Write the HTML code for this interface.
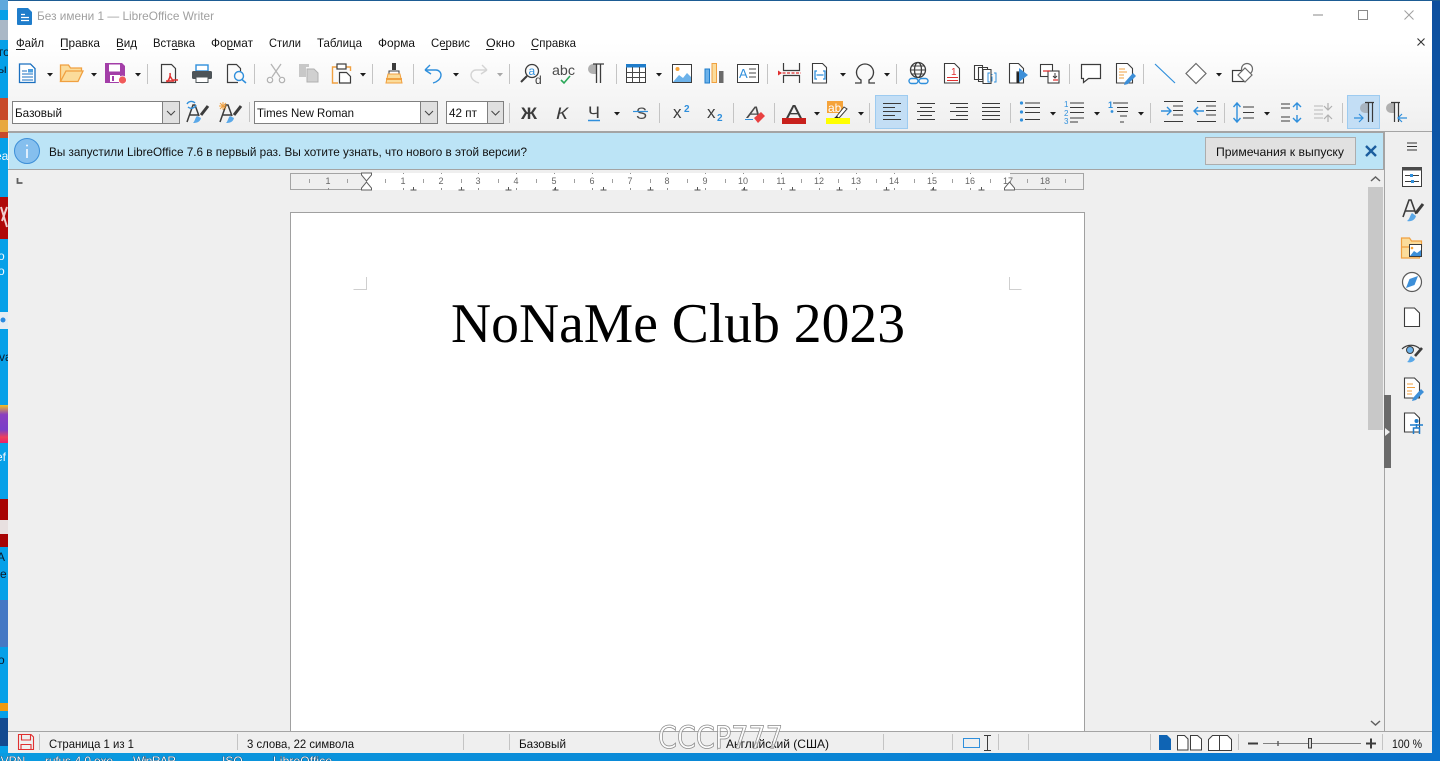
<!DOCTYPE html>
<html lang="ru"><head><meta charset="utf-8"><title>LibreOffice Writer</title>
<style>
html,body{margin:0;padding:0;width:1440px;height:761px;overflow:hidden;background:#0a9be0}
svg{display:block;position:absolute;left:0;top:0}
text{font-family:"Liberation Sans","DejaVu Sans",sans-serif;font-size:12px;fill:#111}
.g{fill:none;stroke:#3c3c3c;stroke-width:1.2}
.b{fill:none;stroke:#2f8fdc;stroke-width:1.4}
.o{fill:none;stroke:#f0a040;stroke-width:1.4}
.l{fill:none;stroke:#3c3c3c;stroke-width:1.3}
.s{stroke:#c4c4c4;stroke-width:1;fill:none}
.lg{fill:none;stroke:#b0b0b0;stroke-width:1.2}
.t{fill:#f4f9ff;stroke:#0b2036;stroke-width:.6;paint-order:stroke}
</style></head><body>
<svg width="1440" height="761" viewBox="0 0 1440 761" xmlns="http://www.w3.org/2000/svg">
<defs>
<linearGradient id="tb" x1="0" y1="0" x2="0" y2="1"><stop offset="0" stop-color="#fff"/><stop offset=".32" stop-color="#fff"/><stop offset="1" stop-color="#efefef"/></linearGradient>
<linearGradient id="rs" x1="0" y1="0" x2="0" y2="1"><stop offset="0" stop-color="#0d4f9e"/><stop offset="1" stop-color="#0a72cc"/></linearGradient>
<linearGradient id="bs" x1="0" y1="0" x2="1" y2="0"><stop offset="0" stop-color="#0a9be0"/><stop offset=".6" stop-color="#0a84d4"/><stop offset="1" stop-color="#0a72cc"/></linearGradient>
<linearGradient id="pu" x1="0" y1="0" x2="0" y2="1"><stop offset="0" stop-color="#f0c020"/><stop offset=".25" stop-color="#8a3fc0"/><stop offset=".65" stop-color="#7a3fc8"/><stop offset=".85" stop-color="#f0405a"/><stop offset="1" stop-color="#e8206a"/></linearGradient>
</defs>

<!-- desktop -->
<rect width="8" height="761" fill="#06a0e8"/>
<rect x="1432" width="8" height="761" fill="url(#rs)"/>
<rect y="753" width="1440" height="8" fill="url(#bs)"/>
<rect width="1440" height="1" fill="#1d5c94"/>
<rect x="0" y="0" width="8" height="10" fill="#5fa8dc"/>
<rect x="0" y="20" width="8" height="20" fill="#aab8c6"/>
<rect x="0" y="98" width="8" height="40" fill="#c84a2a"/>
<rect x="0" y="120" width="8" height="12" fill="#e8a840"/>
<rect x="0" y="197" width="8" height="42" fill="#b00808"/>
<path d="M1 207l6 20M7 207l-5 14" stroke="#f0d0d0" stroke-width="2"/>
<rect x="0" y="312" width="8" height="17" fill="#e6ecf2"/>
<circle cx="3" cy="320" r="2.5" fill="#2b8ae0"/>
<rect x="0" y="405" width="8" height="38" fill="url(#pu)"/>
<rect x="0" y="499" width="8" height="48" fill="#a80404"/>
<rect x="0" y="520" width="8" height="14" fill="#e8e0e0"/>
<rect x="0" y="600" width="8" height="47" fill="#4678c4"/>
<rect x="0" y="703" width="8" height="8" fill="#f09a10"/>
<rect x="0" y="718" width="8" height="28" fill="#144a90"/>
<g style="font-size:12px">
<text x="-1" y="56" style="fill:#0d1a2a">го</text><text x="-2" y="73" style="fill:#0d1a2a">ы</text>
<text x="-5" y="160" style="fill:#f2f8ff">ea</text><text x="-2" y="260" style="fill:#f2f8ff">о</text><text x="-2" y="275" style="fill:#f2f8ff">о</text>
<text x="-1" y="361" style="fill:#0d1a2a">va</text><text x="-4" y="461" style="fill:#f2f8ff">ef</text>
<text x="-3" y="561" style="fill:#0d1a2a">A</text><text x="-4" y="578" style="fill:#0d1a2a">re</text><text x="-2" y="664" style="fill:#0d1a2a">о</text>
<text x="-6" y="765" class="t">nVPN</text><text x="45" y="765" textLength="68" class="t">rufus-4.0.exe</text><text x="133" y="765" textLength="43" class="t">WinRAR</text><text x="222" y="765" class="t">ISO</text><text x="273" y="765" textLength="59" class="t">LibreOffice</text>
</g>

<!-- window base -->
<rect x="8" y="1" width="1424" height="752" fill="#efefef"/>
<rect x="8" y="1" width="1424" height="131" fill="url(#tb)"/>
<rect x="8" y="131" width="1424" height="1.5" fill="#a4a4a4"/>

<!-- title -->
<path d="M18 8h10l4 4v12a1 1 0 0 1-1 1H18a1 1 0 0 1-1-1V9a1 1 0 0 1 1-1z" fill="#1f7dcb"/>
<path d="M21 14.500h4M21 17.500h8M21 20.500h8" stroke="#fff" stroke-width="1.2"/>
<text x="37" y="20" textLength="177" lengthAdjust="spacingAndGlyphs" style="fill:#a0a0a0">Без имени 1 — LibreOffice Writer</text>
<path d="M1313 15h10" stroke="#8a8a8a" stroke-width="1"/>
<rect x="1358.500" y="10.500" width="9" height="9" fill="none" stroke="#8a8a8a"/>
<path d="M1404.500 10.500l9 9M1413.500 10.500l-9 9" stroke="#a0a0a0" stroke-width="1"/>
<path d="M1417.500 38.500l7 7M1424.500 38.500l-7 7" stroke="#333" stroke-width="1.1"/>

<!-- menu -->
<g>
<text x="16" y="47" textLength="28" lengthAdjust="spacingAndGlyphs">Файл</text><text x="60" y="47" textLength="40" lengthAdjust="spacingAndGlyphs">Правка</text><text x="116" y="47" textLength="21" lengthAdjust="spacingAndGlyphs">Вид</text><text x="153" y="47" textLength="42" lengthAdjust="spacingAndGlyphs">Вставка</text><text x="211" y="47" textLength="42" lengthAdjust="spacingAndGlyphs">Формат</text><text x="269" y="47" textLength="32" lengthAdjust="spacingAndGlyphs">Стили</text><text x="317" y="47" textLength="45" lengthAdjust="spacingAndGlyphs">Таблица</text><text x="378" y="47" textLength="37" lengthAdjust="spacingAndGlyphs">Форма</text><text x="431" y="47" textLength="39" lengthAdjust="spacingAndGlyphs">Сервис</text><text x="486" y="47" textLength="29" lengthAdjust="spacingAndGlyphs">Окно</text><text x="531" y="47" textLength="45" lengthAdjust="spacingAndGlyphs">Справка</text>
</g>
<path d="M16 49.500h9M61 49.500h7M117 49.500h7M172 49.500h6M228 49.500h6M441 49.500h7M486 49.500h8M531 49.500h7" stroke="#222" stroke-width="1"/>

<!-- separators -->
<path class="s" d="M147.500 64v20M254.500 64v20M372.500 64v20M413.500 64v20M509.500 64v20M616.500 64v20M767.500 64v20M896.500 64v20M1069.500 64v20M1143.500 64v20M249.500 102v20M509.500 103v20M659.500 103v20M733.500 103v20M774.500 103v20M869.500 103v20M1010.500 103v20M1150.500 103v20M1224.500 103v20M1342.500 103v20"/>

<!-- dropdown arrows -->
<path fill="#1c1c1c" d="M47 73h6l-3 3.500zM91 73h6l-3 3.500zM135 73h6l-3 3.500zM360 73h6l-3 3.500zM453 73h6l-3 3.500zM656 73h6l-3 3.500zM840 73h6l-3 3.500zM884 73h6l-3 3.500zM1216 73h6l-3 3.500zM614 112h6l-3 3.500zM814 112h6l-3 3.500zM858 112h6l-3 3.500zM1050 112h6l-3 3.500zM1094 112h6l-3 3.500zM1138 112h6l-3 3.500zM1264 112h6l-3 3.500z"/>
<path fill="#a8a8a8" d="M497 73h6l-3 3.500z"/>

<!-- row 1 icons -->
<path fill="#fff" stroke="#1a6fbf" stroke-width="1.3" d="M19.500 64h11l4.500 4.500V82.500H19.500z"/><path stroke="#1a6fbf" stroke-width="1.1" d="M22 71h5M22 74h11M22 77h11M22 80h11"/><rect x="28" y="69" width="5" height="3.500" fill="#4ea0e0"/>
<path fill="#fbdc9b" stroke="#f0a040" stroke-width="1.3" d="M60.500 81.500V65h8l2 3h11v3H66l-5.500 10.500zM60.500 81.500L66 71h17l-5 10.500z"/>
<path fill="#a33ea8" d="M105 63h17l3 3v14h-20z"/><path fill="#a33ea8" d="M105 80h15v3h-15z"/><rect x="109" y="64.500" width="11" height="7" fill="#fff"/><rect x="110" y="75" width="10" height="7" fill="#fff"/><rect x="112" y="76" width="2" height="5" fill="#a33ea8"/><circle cx="122.500" cy="80" r="4" fill="#f05a5a" stroke="#fff" stroke-width=".8"/>
<path class="g" fill="#fff" d="M161.500 64.500h10l4 4V82.500h-14z"/><path stroke="#e03030" stroke-width="1.500" fill="none" d="M170 73c1 5-3 9-3 9M170 76l3 5-7 0M173 80h5"/>
<rect x="196" y="65" width="12" height="6" fill="#fff" stroke="#2f8fdc" stroke-width="1.4"/><rect x="192" y="71" width="20" height="8" rx="1.500" fill="#4d5458"/><rect x="196" y="77" width="12" height="5.500" fill="#fff" stroke="#4d5458"/>
<path class="g" d="M227.500 64.500h9l4 4V72M238 82.500H227.500V64.500"/><circle cx="239" cy="76" r="4.500" class="b"/><path d="M242 79.500l4 3.500" stroke="#2f8fdc" stroke-width="1.500"/>
<path d="M271 64l9 13M281 64l-9 13" stroke="#b4b4b4" stroke-width="1.300"/><circle cx="270" cy="80" r="2.700" class="lg"/><circle cx="282" cy="80" r="2.700" class="lg"/>
<path d="M299 64h10v3h-3v10h-7z" fill="#c8c8c8"/><path d="M307 69h7l4 4v9h-11z" fill="#d0d0d0" stroke="#b0b0b0"/>
<path class="o" d="M337 67h-4.500v16H338"/><path class="o" d="M346 67h4.500v4"/><rect x="337" y="64" width="9" height="5" fill="#fff" stroke="#3c3c3c" stroke-width="1.200"/><path d="M339.500 72.500h7l4 4v6.500h-11z" fill="#fff" stroke="#3c3c3c" stroke-width="1.200"/>
<path d="M392 63h4v7h-4z" fill="#3c3c3c"/><path d="M389 71h10v3h-10z" fill="#fff" stroke="#3c3c3c"/><path d="M388 74h12l2 9h-16z" fill="#fbdc9b" stroke="#f0a040"/><rect x="386" y="78" width="16" height="2" fill="#f0a040"/>
<path d="M425 70l5-5M425 70l6 4M425 70h11a5 5 0 0 1 5 5c0 4-4 7-8 8" fill="none" stroke="#2f8fdc" stroke-width="1.400"/>
<path d="M487 70l-5-5M487 70l-6 4M487 70h-11a5 5 0 0 0-5 5c0 4 4 7 8 8" fill="none" stroke="#d4d4d4" stroke-width="1.400"/>
<circle cx="532" cy="71" r="6.500" fill="none" stroke="#3c3c3c" stroke-width="1.300"/><path d="M527 76l-6 6" stroke="#3c3c3c" stroke-width="2"/>
<text x="528.500" y="75" style="font-size:12px;fill:#2f8fdc">a</text><text x="535" y="84" style="font-size:12px;fill:#3c3c3c">d</text>
<text x="552" y="75" textLength="23" lengthAdjust="spacingAndGlyphs" style="font-size:14px;fill:#4a4a4a">abc</text><path d="M561 80l3 3 6-7" fill="none" stroke="#2aa858" stroke-width="1.600"/>
<path d="M596 64h-3a5 5 0 0 0 0 10h3z" fill="#b0b0b0"/><path d="M596.500 64V83M600.500 64V83M593 64h11" stroke="#3c3c3c" stroke-width="1.300" fill="none"/>
<rect x="626.500" y="64.500" width="19" height="18" fill="#fff" stroke="#3c3c3c"/><rect x="626" y="64" width="20" height="3.500" fill="#1f7dcb"/><path d="M632.500 67v15M639.500 67v15M627 72.500h18M627 77.500h18" stroke="#4a4a4a"/>
<rect x="672.500" y="64.500" width="19" height="18" fill="#fff" stroke="#3c3c3c"/><circle cx="677.500" cy="69" r="2" fill="#f5a33a"/><path d="M673 82l6-7 4 3 4-5 4 4v5z" fill="#6cb2ea"/>
<rect x="705" y="69" width="4.500" height="14" fill="#6cb2ea" stroke="#1f7dcb"/><rect x="712" y="63.500" width="4.500" height="19" fill="#fbdc9b" stroke="#f0a040"/><rect x="719" y="71" width="4.500" height="12" fill="#6a6a6a"/>
<rect x="737.500" y="64.500" width="21" height="18" fill="#fff" stroke="#3c3c3c"/><text x="739" y="78" style="font-size:13px;fill:#2f8fdc">A</text><path d="M749 69h7M749 73h7M749 77h7" stroke="#4a4a4a"/>
<path d="M783.500 63v7.500h16V63M783.500 83v-7.500h16V83" fill="none" stroke="#3c3c3c" stroke-width="1.200"/><path d="M778 73h23" stroke="#e03030" stroke-dasharray="3 1.500" stroke-width="1.200"/><path d="M778 70.500l4 2.500-4 2.500z" fill="#e03030"/>
<path d="M812.500 63.500h10l4 4v15.500h-14z" fill="#fff" stroke="#3c3c3c" stroke-width="1.100"/><path d="M817 71h-2v8h2M823 71h2v8h-2M816.500 75h7" stroke="#2f8fdc" stroke-width="1.300" fill="none"/>
<path d="M855 83h6v-3a8.500 8.500 0 1 1 8 0v3h6" fill="none" stroke="#3c3c3c" stroke-width="1.300"/>
<circle cx="918" cy="70" r="7.500" class="l"/><ellipse cx="918" cy="70" rx="3.500" ry="7.500" class="l"/><path d="M910.500 70h15M912 66h12M912 74h12" stroke="#3c3c3c"/><rect x="909" y="78.500" width="9" height="5" rx="2.500" class="b"/><rect x="919" y="78.500" width="9" height="5" rx="2.500" class="b"/>
<path d="M944.500 63.500h10l5 5v14.500h-15z" fill="#fff" stroke="#3c3c3c" stroke-width="1.100"/><text x="951" y="75" style="font-size:10px;fill:#e03030">1</text><path d="M947 77.500h11M947 80.500h11" stroke="#e03030"/>
<path d="M974.500 65.500h8v14h-8zM978.500 67.500h9v14h-9z" fill="#fff" stroke="#3c3c3c" stroke-width="1.100"/><path d="M983 69.500h8v14h-8z" fill="#fff" stroke="#3c3c3c" stroke-width="1.100"/><path d="M990 73h-2v9h2M994 73h2v9h-2M992 74v1M992 76.500v5" stroke="#2f8fdc" fill="none"/>
<path d="M1009.500 63.500h9l5 5V83h-14z" fill="#fff" stroke="#3c3c3c" stroke-width="1.100"/><path d="M1017 83V72h2v11" stroke="#3c3c3c" stroke-width="1.200"/><path d="M1019 68v14l9-7z" fill="#3d8fd8"/>
<rect x="1040.500" y="64.500" width="12" height="12" fill="#fff" stroke="#3c3c3c" stroke-width="1.100"/><rect x="1048" y="71" width="11" height="12" fill="#fff" stroke="#3c3c3c" stroke-width="1.100"/><path d="M1043 71h7M1053 80h5" stroke="#e03030" stroke-width="1.200"/><path d="M1055 73v5M1053 76l2 2 2-2" fill="none" stroke="#3c3c3c"/>
<path d="M1081.500 64.500h19v14h-12l-5 4v-4h-2z" fill="#fff" stroke="#3c3c3c" stroke-width="1.200"/>
<path d="M1116.500 63.500h11l5 5v14.500h-16z" fill="#fff" stroke="#3c3c3c" stroke-width="1.100"/><path d="M1119 69h6M1119 72h8M1119 75h5M1119 78h5" stroke="#f0a040"/><path d="M1125 82l8-9 3 3-8 8-4 1z" fill="#3d8fd8"/>
<path d="M1155 64l20 19" stroke="#2f8fdc" stroke-width="1.200"/>
<path d="M1196 63.500l10 10-10 10-10-10z" fill="#fff" stroke="#6a6a6a" stroke-width="1.200"/>
<rect x="1232.500" y="70.500" width="11" height="11" fill="#fff" stroke="#3c3c3c" stroke-width="1.200"/><circle cx="1247" cy="69" r="5.500" fill="#fff" stroke="#6a6a6a" stroke-width="1.200"/><path d="M1245 68l7 7-7 7-7-7z" fill="#fff" stroke="#6a6a6a" stroke-width="1.200"/>

<!-- row 2 combos -->
<rect x="12.500" y="101.500" width="167" height="22" fill="#fff" stroke="#808080"/>
<rect x="162.500" y="101.500" width="17" height="22" fill="#e0e0e0" stroke="#808080"/>
<path d="M167 111l4 4 4-4" fill="none" stroke="#444"/>
<text x="15" y="117" textLength="47" lengthAdjust="spacingAndGlyphs">Базовый</text>
<rect x="254.500" y="101.500" width="183" height="22" fill="#fff" stroke="#808080"/>
<rect x="420.500" y="101.500" width="17" height="22" fill="#e0e0e0" stroke="#808080"/>
<path d="M425 111l4 4 4-4" fill="none" stroke="#444"/>
<text x="257" y="117" textLength="97" lengthAdjust="spacingAndGlyphs">Times New Roman</text>
<rect x="446.500" y="101.500" width="57" height="22" fill="#fff" stroke="#808080"/>
<rect x="487.500" y="101.500" width="16" height="22" fill="#e0e0e0" stroke="#808080"/>
<path d="M491.500 111l4 4 4-4" fill="none" stroke="#444"/>
<text x="449" y="117" textLength="28" lengthAdjust="spacingAndGlyphs">42 пт</text>

<!-- style icons -->
<path d="M187 122l6-17h2l4 11M190 115h8" fill="none" stroke="#3c3c3c" stroke-width="1.500"/><path d="M208 106l-7 9" stroke="#3c3c3c" stroke-width="3"/><path d="M197 116l4 2c-1 4-4 5-8 5 2-2 2-5 4-7z" fill="#5aa8e8"/><path d="M187 104a5 5 0 0 1 8-1M196 105a5 5 0 0 1-8 2" class="b"/>
<path d="M220 122l6-17h2l4 11M223 115h8" fill="none" stroke="#3c3c3c" stroke-width="1.500"/><path d="M241 106l-7 9" stroke="#3c3c3c" stroke-width="3"/><path d="M230 116l4 2c-1 4-4 5-8 5 2-2 2-5 4-7z" fill="#5aa8e8"/><path d="M223 102v8M219 106h8M220 103l6 6M226 103l-6 6" stroke="#f0a040"/>

<!-- char formats -->
<text x="521" y="119" textLength="16" lengthAdjust="spacingAndGlyphs" style="font-size:17px;font-weight:bold;fill:#3c3c3c">Ж</text>
<text x="556" y="119" textLength="12" lengthAdjust="spacingAndGlyphs" style="font-size:17px;font-style:italic;fill:#3c3c3c">К</text>
<text x="588" y="118" textLength="12" lengthAdjust="spacingAndGlyphs" style="font-size:17px;fill:#3c3c3c">Ч</text><path d="M588 120.500h12" stroke="#2f8fdc" stroke-width="1.500"/>
<text x="636" y="119" textLength="11" lengthAdjust="spacingAndGlyphs" style="font-size:17px;fill:#4a4a4a">S</text><path d="M633 111.500h15" stroke="#2f8fdc" stroke-width="1.200"/>
<text x="673" y="118" style="font-size:17px;fill:#3c3c3c">x</text><text x="684" y="112" style="font-size:10px;font-weight:bold;fill:#2f8fdc">2</text>
<text x="707" y="118" style="font-size:17px;fill:#3c3c3c">x</text><text x="717" y="121" style="font-size:10px;font-weight:bold;fill:#2f8fdc">2</text>
<text x="747" y="118" textLength="14" lengthAdjust="spacingAndGlyphs" style="font-size:17px;font-style:italic;fill:#4a4a4a">A</text><path d="M745 119.500h8" stroke="#2f8fdc"/><path d="M754 118l7-6 4 4-7 7z" fill="#e84040"/>
<text x="786" y="118" textLength="16" lengthAdjust="spacingAndGlyphs" style="font-size:18px;fill:#3c3c3c">A</text><rect x="782" y="118" width="24" height="6" fill="#c8201c"/>
<rect x="827" y="101" width="16" height="12" fill="#f5a33a"/><text x="828" y="112" style="font-size:12px;fill:#fff">ab</text><path d="M836 117l8-10 3 2-8 9z" fill="#fff" stroke="#3c3c3c"/><path d="M834 118l3-2 2 2z" fill="#222"/><rect x="826" y="118" width="24" height="6" fill="#ffff00"/>

<!-- align -->
<rect x="875.500" y="95.500" width="32" height="33" fill="#c3def5" stroke="#9dcbf0"/>
<path d="M883 103.500h18M883 107.500h12M883 111.500h18M883 115.500h12M883 119.500h18" stroke="#3a3a3a" fill="none"/>
<path d="M917 103.500h18M920 107.500h12M917 111.500h18M920 115.500h12M917 119.500h18" stroke="#3a3a3a"/>
<path d="M950 103.500h18M956 107.500h12M950 111.500h18M956 115.500h12M950 119.500h18" stroke="#3a3a3a"/>
<path d="M982 103.500h18M982 107.500h18M982 111.500h18M982 115.500h18M982 119.500h18" stroke="#3a3a3a"/>
<path d="M1025 103h15M1025 107.500h15M1025 119.500h15M1025 112.500h15" stroke="#3a3a3a"/><circle cx="1021.500" cy="103" r="1.600" fill="#2f8fdc"/><circle cx="1021.500" cy="112" r="1.600" fill="#2f8fdc"/><circle cx="1021.500" cy="120" r="1.600" fill="#2f8fdc"/>
<text x="1064" y="107" style="font-size:8px;fill:#2f8fdc">1</text><text x="1064" y="116" style="font-size:8px;fill:#2f8fdc">2</text><text x="1064" y="124" style="font-size:8px;fill:#2f8fdc">3</text><path d="M1070 103h14M1070 107.500h14M1070 112.500h14M1070 118h14M1070 122h8" stroke="#3a3a3a"/>
<text x="1108" y="108" style="font-size:9px;font-weight:bold;fill:#2f8fdc">1</text><circle cx="1112" cy="111.500" r="1.400" fill="#2f8fdc"/><path d="M1113 103h15M1117 107.500h11M1117 111.500h11M1120 116h7M1120 122h4" stroke="#3a3a3a"/>
<path d="M1164 101.500h19M1173 106h10M1173 110.500h10M1173 115h10M1164 121.500h19" stroke="#3a3a3a"/><path d="M1161 111h10M1167 107l4 4-4 4" class="b"/>
<path d="M1197 101.500h19M1206 106h10M1206 110.500h10M1206 115h10M1197 121.500h19" stroke="#3a3a3a"/><path d="M1204 111h-10M1198 107l-4 4 4 4" class="b"/>
<path d="M1237 104v17M1233.500 107l3.500-4 3.500 4M1233.500 118l3.500 4 3.500-4" class="b"/><path d="M1243 107h11M1243 112.500h11M1243 118h11" stroke="#3a3a3a"/>
<path d="M1281 104h9M1281 108h9M1281 117h9M1281 121h9" stroke="#3a3a3a"/><path d="M1297 103v7M1293 107l4-4 4 4M1297 122v-7M1293 118l4 4 4-4" class="b"/>
<path d="M1314 106h9M1314 110h9M1314 114h9M1314 118h9" stroke="#b8b8b8"/><path d="M1328 103v7M1324 106l4 4 4-4M1328 122v-7M1324 119l4-4 4 4" class="lg"/>
<rect x="1347.500" y="95.500" width="32" height="33" fill="#c3def5" stroke="#9dcbf0"/>
<path d="M1368 103h-3a5 5 0 0 0 0 10h3z" fill="#a8b4c0"/><path d="M1368.500 103V122M1372.500 103V122M1365 102.500h9" stroke="#3a3a3a" stroke-width="1.200" fill="none"/><path d="M1354 118h9M1359 114l4 4-4 4" fill="none" stroke="#2f8fdc" stroke-width="1.200"/>
<path d="M1394 103h-3a5 5 0 0 0 0 10h3z" fill="#b0b0b0"/><path d="M1394.500 103V122M1398.500 103V122M1391 102.500h9" stroke="#3a3a3a" stroke-width="1.200" fill="none"/><path d="M1407 118h-9M1402 114l-4 4 4 4" fill="none" stroke="#2f8fdc" stroke-width="1.200"/>

<!-- infobar -->
<rect x="9" y="133" width="1374" height="36" fill="#bce4f6"/>
<path d="M8 132.500h1376M8 169.500h1376M1383.500 132v38" stroke="#a4a4a4" fill="none"/>
<circle cx="27" cy="151" r="12.500" fill="#85bfee" stroke="#3d8fd8" stroke-width="1"/>
<path d="M27 149v9" stroke="#f4faff" stroke-width="1.600"/><circle cx="27" cy="145.500" r="1" fill="#f4faff"/>
<text x="49" y="156" textLength="478" lengthAdjust="spacingAndGlyphs">Вы запустили LibreOffice 7.6 в первый раз. Вы хотите узнать, что нового в этой версии?</text>
<rect x="1205.500" y="137.500" width="150" height="27" fill="#e1e1e1" stroke="#adadad"/>
<text x="1216" y="156" textLength="128" lengthAdjust="spacingAndGlyphs">Примечания к выпуску</text>
<path d="M1366 146l10 10M1376 146l-10 10" stroke="#1b5e9e" stroke-width="2.400"/>

<!-- ruler -->
<path d="M17.500 178v5h5" fill="none" stroke="#606060" stroke-width="1.800"/>
<rect x="290.500" y="173.500" width="793" height="16" fill="#efefef" stroke="#a4a4a4"/>
<rect x="366" y="173" width="644" height="17" fill="#fff"/>
<path d="M309.500 179v4M347.500 179v4M385.500 179v4M423.500 179v4M461.500 179v4M498.500 179v4M536.500 179v4M574.500 179v4M612.500 179v4M650.500 179v4M687.500 179v4M725.500 179v4M763.500 179v4M801.500 179v4M838.500 179v4M876.500 179v4M914.500 179v4M952.500 179v4M990.500 179v4M1027.500 179v4M1065.500 179v4" stroke="#a0a0a0"/>
<path d="M328.500 188v2M403.500 173v1M403.500 188v2M441.500 173v1M441.500 188v2M478.500 173v1M478.500 188v2M516.500 173v1M516.500 188v2M554.500 173v1M554.500 188v2M592.500 173v1M592.500 188v2M630.500 173v1M630.500 188v2M667.500 173v1M667.500 188v2M705.500 173v1M705.500 188v2M743.500 173v1M743.500 188v2M781.500 173v1M781.500 188v2M819.500 173v1M819.500 188v2M856.500 173v1M856.500 188v2M894.500 173v1M894.500 188v2M932.500 173v1M932.500 188v2M970.500 173v1M970.500 188v2M1045.500 188v2" stroke="#909090"/>
<g text-anchor="middle">
<text x="328" y="184" style="font-size:9px;fill:#666">1</text><text x="403" y="184" style="font-size:9px;fill:#666">1</text><text x="441" y="184" style="font-size:9px;fill:#666">2</text><text x="478" y="184" style="font-size:9px;fill:#666">3</text><text x="516" y="184" style="font-size:9px;fill:#666">4</text><text x="554" y="184" style="font-size:9px;fill:#666">5</text><text x="592" y="184" style="font-size:9px;fill:#666">6</text><text x="630" y="184" style="font-size:9px;fill:#666">7</text><text x="667" y="184" style="font-size:9px;fill:#666">8</text><text x="705" y="184" style="font-size:9px;fill:#666">9</text><text x="743" y="184" style="font-size:9px;fill:#666">10</text><text x="781" y="184" style="font-size:9px;fill:#666">11</text><text x="819" y="184" style="font-size:9px;fill:#666">12</text><text x="856" y="184" style="font-size:9px;fill:#666">13</text><text x="894" y="184" style="font-size:9px;fill:#666">14</text><text x="932" y="184" style="font-size:9px;fill:#666">15</text><text x="970" y="184" style="font-size:9px;fill:#666">16</text><text x="1008" y="184" style="font-size:9px;fill:#666">17</text><text x="1045" y="184" style="font-size:9px;fill:#666">18</text>
</g>
<path d="M410.500 190h6M413.500 187v3M458.500 190h6M461.500 187v3M505.500 190h6M508.500 187v3M552.500 190h6M555.500 187v3M600.500 190h6M603.500 187v3M647.500 190h6M650.500 187v3M694.500 190h6M697.500 187v3M741.500 190h6M744.500 187v3M789.500 190h6M792.500 187v3M836.500 190h6M839.500 187v3M883.500 190h6M886.500 187v3M930.500 190h6M933.500 187v3M978.500 190h6M981.500 187v3" stroke="#555" stroke-width="1" fill="none"/>
<path d="M361.500 173h10v2l-5 6-5-6zM361.500 190h10v-2l-5-6-5 6z" fill="#fff" stroke="#606060" stroke-width="1"/>
<path d="M1004.500 190h10v-2l-5-6-5 6z" fill="#fff" stroke="#606060"/>

<!-- page -->
<rect x="290.500" y="212.500" width="794" height="540" fill="#fff" stroke="#a0a0a0"/>
<path d="M366.500 277v12.500h-13M1009.500 277v12.500h12" fill="none" stroke="#cfcfcf"/>
<text x="451" y="342" textLength="454" lengthAdjust="spacingAndGlyphs" style="font-family:'Liberation Serif','Times New Roman',serif;font-size:56px;fill:#000">NoNaMe Club 2023</text>

<!-- scrollbar -->
<rect x="1368" y="170" width="16" height="562" fill="#efefef"/>
<rect x="1368" y="187" width="15" height="243" fill="#c8c8c8"/>
<path d="M1371 181l4.500-4 4.500 4M1371 721l4.500 4 4.500-4" fill="none" stroke="#606060" stroke-width="1.500"/>

<!-- sidebar -->
<rect x="1385" y="132" width="47" height="600" fill="#efefef"/>
<path d="M1384.500 132v600" stroke="#a4a4a4"/>
<rect x="1384" y="395" width="7" height="73" fill="#6a6a6a"/>
<path d="M1385 428l5 4-5 4z" fill="#eee"/>
<path d="M1407 143h10M1407 146.500h10M1407 150h10" stroke="#333" stroke-width="1"/>
<rect x="1402.500" y="167.500" width="19" height="19" fill="#fff" stroke="#3c3c3c"/><rect x="1402" y="167" width="20" height="3.500" fill="#4a4a4a"/><path d="M1405 175.500h14M1405 181.500h14" stroke="#3c3c3c"/><rect x="1410" y="174" width="3" height="3" fill="#2f8fdc"/><rect x="1411" y="180" width="3" height="3" fill="#2f8fdc"/>
<path d="M1403 217l6-17h2l5 14M1405.500 211h9" fill="none" stroke="#3c3c3c" stroke-width="1.600"/><path d="M1423 204l-7 9" stroke="#3c3c3c" stroke-width="3"/><path d="M1412 213l4 3c-1 4-5 6-9 5 3-2 3-6 5-8z" fill="#5aa8e8"/>
<path d="M1401.500 238h8l2 3h10v6h-20zM1401.500 258v-11h20l-2 11z" fill="#fbdc9b" stroke="#f0a040" stroke-width="1.200"/><rect x="1409.500" y="244.500" width="12" height="12" fill="#fff" stroke="#3c3c3c"/><path d="M1410 256l4-5 3 2 4-3v6z" fill="#3d8fd8"/><circle cx="1412" cy="248" r="1.300" fill="#f5a33a"/>
<circle cx="1412" cy="282" r="9.500" fill="#fff" stroke="#5a5a5a" stroke-width="1.200"/><path d="M1418 276l-3.500 9-8.500 3 3.500-9z" fill="#3d8fd8"/>
<path d="M1404.500 308h10l5 5v13.500h-15z" fill="#fff" stroke="#3c3c3c" stroke-width="1.100"/>
<path d="M1402 349c5-5 13-5 18 0" fill="none" stroke="#3c3c3c" stroke-width="1.200"/><circle cx="1410" cy="350" r="3.500" fill="#6cb2ea" stroke="#3c3c3c"/><path d="M1422 348l-7 8" stroke="#3c3c3c" stroke-width="2.600"/><path d="M1411 356l4 3c-1 3-5 4-8 3 2-1 2-4 4-6z" fill="#5aa8e8"/>
<path d="M1404.500 378h10l5 5v15h-15z" fill="#fff" stroke="#3c3c3c" stroke-width="1.100"/><path d="M1407 384h6M1407 387.500h8M1407 391h5M1407 394h5" stroke="#f0a040"/><path d="M1413 398l8-9 3 3-8 8-4 1z" fill="#3d8fd8"/>
<path d="M1404.500 413h10l5 5v14h-15z" fill="#fff" stroke="#3c3c3c" stroke-width="1.100"/><circle cx="1416.500" cy="421" r="2" fill="#1f7dcb"/><path d="M1410 425h13M1416.500 424v4M1413.500 434v-6h6v6" fill="none" stroke="#1f7dcb" stroke-width="1.500"/>

<!-- status bar -->
<rect x="8" y="732" width="1424" height="21" fill="#efefef"/>
<path d="M8 731.500h1424" stroke="#a4a4a4"/>
<path d="M39.500 734v16M237.500 734v16M463.500 734v16M509.500 734v16M717.500 734v16M883.500 734v16M952.500 734v16M998.500 734v16M1028.500 734v16M1150.500 734v16M1238.500 734v16M1382.500 734v16" stroke="#c4c4c4"/>
<path d="M18.500 734.500h12.500l2.500 2.500v12.500h-15z" fill="none" stroke="#e03030" stroke-width="1.100"/><path d="M21.500 735v5h9v-5M21 749.500v-5h10v5" fill="none" stroke="#e03030" stroke-width="1.100"/>
<text x="49" y="748" textLength="85" lengthAdjust="spacingAndGlyphs">Страница 1 из 1</text>
<text x="247" y="748" textLength="107" lengthAdjust="spacingAndGlyphs">3 слова, 22 символа</text>
<text x="519" y="748" textLength="47" lengthAdjust="spacingAndGlyphs">Базовый</text>
<text x="726" y="748" textLength="103" lengthAdjust="spacingAndGlyphs">Английский (США)</text>
<rect x="963.500" y="738.500" width="16" height="9" fill="none" stroke="#2f8fdc"/>
<path d="M987.500 736v14M984 735.500h7M984 750.500h7" stroke="#3c3c3c" fill="none"/>
<path d="M1159 735h8l4 4v11h-12z" fill="#0f64b4"/>
<path d="M1177.500 735.500h7l3.500 3.500v11h-10.500zM1190.500 735.500h7l4 3.500v11h-11z" fill="#fff" stroke="#3c3c3c"/>
<path d="M1208.500 739.500l4-4h7v15h-11zM1219.500 735.500h8l4 4v11h-12z" fill="#fff" stroke="#3c3c3c"/>
<path d="M1248 743.500h10M1366 743.500h10M1371 738.500v10" stroke="#3c3c3c" stroke-width="2"/>
<path d="M1263 743.500h98" stroke="#808080"/>
<path d="M1278 741v5" stroke="#5a5a5a" stroke-width="1.400"/>
<rect x="1308.500" y="738.500" width="3" height="9.500" fill="#d8d8d8" stroke="#3c3c3c"/>
<text x="1392" y="748" textLength="30" lengthAdjust="spacingAndGlyphs">100 %</text>

<!-- watermark -->
<text x="658" y="748" textLength="125" lengthAdjust="spacingAndGlyphs" style="font-family:'DejaVu Sans',sans-serif;font-size:31px;fill:#fff;fill-opacity:.75;stroke:#8a8a8a;stroke-width:.8">CCCP777</text>
</svg>
</body></html>
